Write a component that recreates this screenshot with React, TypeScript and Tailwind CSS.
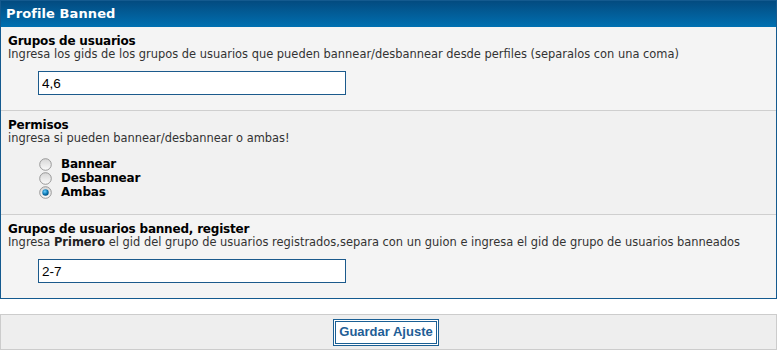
import { useState } from "react"

const verdana = "font-['Verdana','DejaVu_Sans',sans-serif]"

function Radio({ checked }: { checked: boolean }) {
  return (
    <svg width="13" height="13" viewBox="0 0 13 13" className="shrink-0">
      <defs>
        <linearGradient id="rg" x1="0" y1="0" x2="0" y2="1">
          <stop offset="0" stopColor="#d6d6d6" />
          <stop offset="1" stopColor="#fbfbfb" />
        </linearGradient>
        <radialGradient id="dot" cx="0.4" cy="0.35" r="0.7">
          <stop offset="0" stopColor="#6fd0ff" />
          <stop offset="0.6" stopColor="#0b78b4" />
          <stop offset="1" stopColor="#034a78" />
        </radialGradient>
      </defs>
      <circle cx="6.5" cy="6.5" r="5.8" fill="url(#rg)" stroke="#8f8f8f" strokeWidth="0.9" />
      {checked && <circle cx="6.5" cy="6.5" r="3.2" fill="url(#dot)" />}
    </svg>
  )
}

function Section({
  title,
  children,
  className,
}: {
  title: string
  children: React.ReactNode
  className?: string
}) {
  return (
    <div className={`px-[7px] pt-[7px] ${className ?? ""}`}>
      <div className="pt-[1px] text-[12px] leading-[13px] tracking-[-0.2px] font-bold text-black">{title}</div>
      {children}
    </div>
  )
}

export default function App() {
  const [perm, setPerm] = useState("ambas")
  const [grupos, setGrupos] = useState("4,6")
  const [banned, setBanned] = useState("2-7")

  const inputCls =
    "block w-[308px] h-[24px] mt-[10px] ml-[30px] border border-[#1b5a8c] bg-white px-[3px] text-[13.5px] text-black font-['Arial','Liberation_Sans',sans-serif] outline-none"

  // descriptions
  const desc = "text-[11.45px] leading-[13px] text-[#333]"

  return (
    <div className={`w-[777px] bg-white ${verdana}`}>
      <div className="border border-[#145a8f]">
        <div className="h-[26px] bg-gradient-to-b from-[#034b80] to-[#0070b1] pl-[5px] pt-[1px] text-[13px] leading-[24px] tracking-[0.1px] font-bold text-white">
          Profile Banned
        </div>

        <Section title="Grupos de usuarios" className="bg-[#f4f4f4] pb-[15px]">
          <div className={desc}>
            Ingresa los gids de los grupos de usuarios que pueden bannear/desbannear desde perfiles (separalos con una coma)
          </div>
          <input className={inputCls} value={grupos} onChange={(e) => setGrupos(e.target.value)} />
        </Section>

        <Section title="Permisos" className="bg-[#f1f1f1] border-t border-[#cfcfcf] pb-[15px]">
          <div className={desc}>ingresa si pueden bannear/desbannear o ambas!</div>
          <div className="mt-[12px] ml-[31px] flex flex-col">
            {[
              ["bannear", "Bannear"],
              ["desbannear", "Desbannear"],
              ["ambas", "Ambas"],
            ].map(([key, label]) => (
              <label
                key={key}
                onClick={() => setPerm(key)}
                className="flex h-[14px] items-center gap-[9px] text-[12px] tracking-[-0.2px] font-bold text-black cursor-pointer"
              >
                <Radio checked={perm === key} />
                {label}
              </label>
            ))}
          </div>
        </Section>

        <Section
          title="Grupos de usuarios banned, register"
          className="bg-[#f4f4f4] border-t border-[#cfcfcf] pb-[15px]"
        >
          <div className={desc}>
            Ingresa <b className="text-[#222]">Primero</b> el gid del grupo de usuarios registrados,separa con un guion e ingresa el gid de grupo de usuarios banneados
          </div>
          <input className={inputCls} value={banned} onChange={(e) => setBanned(e.target.value)} />
        </Section>
      </div>

      <div className="mt-[15px] flex h-[36px] items-center justify-center border border-[#cccccc] bg-[#eeeeee]">
        <button className="mr-[5px] h-[27px] w-[106px] border-[3px] border-double border-[#1a5f94] bg-white text-[13px] font-bold text-[#1f5e96] font-['Arial','Liberation_Sans',sans-serif]">
          Guardar Ajuste
        </button>
      </div>
    </div>
  )
}
